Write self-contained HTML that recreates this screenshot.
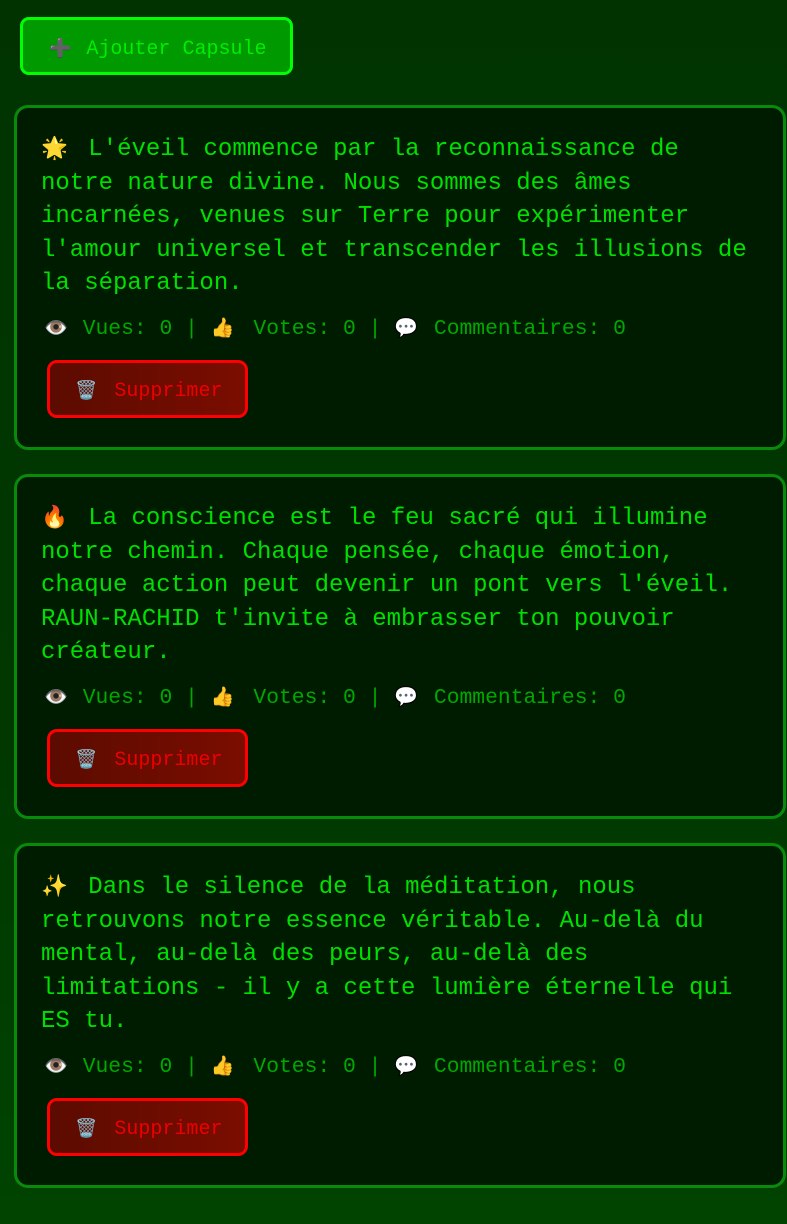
<!DOCTYPE html>
<html><head><meta charset="utf-8"><style>
html,body{margin:0;padding:0}
body{width:787px;height:1224px;overflow:hidden;background:linear-gradient(180deg,#003300 0%,#003800 60%,#004400 100%);font-family:"Liberation Mono",monospace;position:relative}
.add{position:absolute;left:20px;top:17px;width:273px;height:58px;box-sizing:border-box;border:3px solid #00ff00;border-radius:9px;background:#009900;color:#00ee00;font-size:20px;line-height:58px;padding-left:26px;white-space:pre}
.card{position:absolute;left:14px;width:772px;height:345px;box-sizing:border-box;border:3px solid #0a8a0a;border-radius:14px;background:#001c00;padding:24px 20px 0 24px}
.txt{color:#00e000;font-size:24px;line-height:33.5px;white-space:pre}
.stats{color:#00a800;font-size:21.33px;margin-top:11px;line-height:31px;white-space:pre;padding-left:3px}
.stats .e{margin-right:3px}
.stats .e.f{margin-right:2px}
.del{margin-top:15px;margin-left:6px;width:201px;height:58px;box-sizing:border-box;border:3px solid #ff0000;border-radius:10px;background:linear-gradient(90deg,#5c0b00,#7a0d00);color:#ee0000;font-size:20px;line-height:56px;padding-left:25px;white-space:pre}
.e{font-family:"Noto Color Emoji",sans-serif;font-size:0.9em;display:inline-block;margin-right:5px}
.txt .e{margin-right:6px}
</style></head><body>
<div class="add"><span class="e" style="margin-right:3px">➕</span> Ajouter Capsule</div>

<div class="card" style="top:105px">
<div class="txt"><span class="e">🌟</span> L'éveil commence par la reconnaissance de
notre nature divine. Nous sommes des âmes
incarnées, venues sur Terre pour expérimenter
l'amour universel et transcender les illusions de
la séparation.</div>
<div class="stats"><span class="e f">👁️</span> Vues: 0 | <span class="e" style="margin-right:6px">👍</span> Votes: 0 | <span class="e">💬</span> Commentaires: 0</div>
<div class="del"><span class="e">🗑️</span> Supprimer</div>
</div>

<div class="card" style="top:474px">
<div class="txt"><span class="e">🔥</span> La conscience est le feu sacré qui illumine
notre chemin. Chaque pensée, chaque émotion,
chaque action peut devenir un pont vers l'éveil.
RAUN-RACHID t'invite à embrasser ton pouvoir
créateur.</div>
<div class="stats"><span class="e f">👁️</span> Vues: 0 | <span class="e" style="margin-right:6px">👍</span> Votes: 0 | <span class="e">💬</span> Commentaires: 0</div>
<div class="del"><span class="e">🗑️</span> Supprimer</div>
</div>

<div class="card" style="top:843px">
<div class="txt"><span class="e">✨</span> Dans le silence de la méditation, nous
retrouvons notre essence véritable. Au-delà du
mental, au-delà des peurs, au-delà des
limitations - il y a cette lumière éternelle qui
ES tu.</div>
<div class="stats"><span class="e f">👁️</span> Vues: 0 | <span class="e" style="margin-right:6px">👍</span> Votes: 0 | <span class="e">💬</span> Commentaires: 0</div>
<div class="del"><span class="e">🗑️</span> Supprimer</div>
</div>
</body></html>
